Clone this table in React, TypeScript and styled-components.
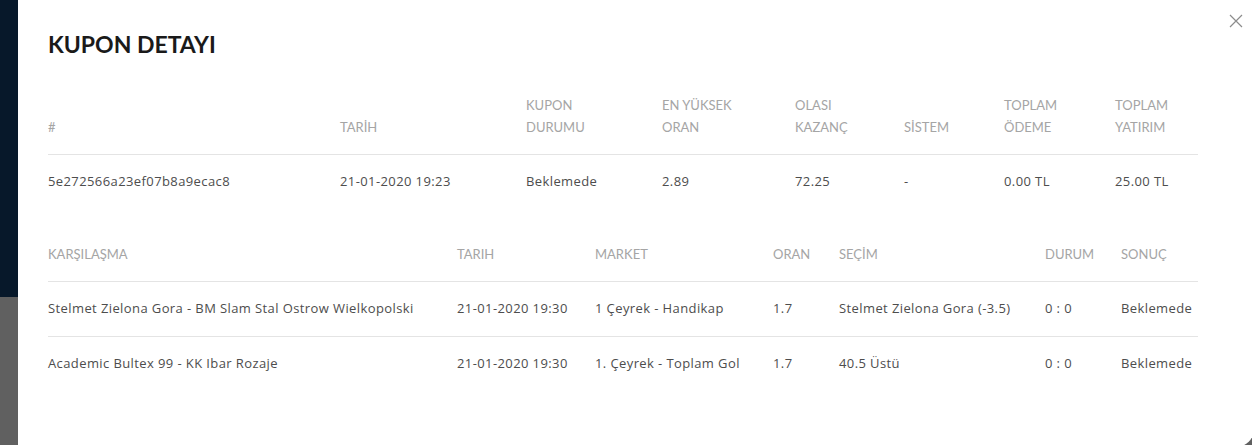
import React from "react";
import styled, { createGlobalStyle } from "styled-components";

const Global = createGlobalStyle`
  html, body { margin: 0; padding: 0; height: 445px; overflow: hidden; }
  body { font-family: Lato, "Noto Sans", sans-serif; }
`;

const Backdrop = styled.div`
  height: 445px;
  display: flex;
  padding-left: 18px;
  background: linear-gradient(to bottom, #07182a 0, #07182a 297px, #606060 297px);
  overflow: hidden;
`;

const Modal = styled.div`
  position: relative;
  flex: 1;
  margin-right: -2px;
  height: 447px;
  flex-shrink: 0;
  background: #fff;
  border-bottom-right-radius: 18px;
  padding: 30px 0 0 30px;
  box-sizing: border-box;
`;

const Close = styled.button`
  position: absolute;
  top: 14px;
  right: 11px;
  width: 14px;
  height: 14px;
  padding: 0;
  border: 0;
  background: transparent;
  cursor: pointer;
  display: flex;
`;

const Title = styled.h2`
  margin: 0 0 20px;
  font-size: 23px;
  line-height: 28px;
  font-weight: 700;
  color: #1a1a1a;
`;

const Table = styled.table<{ $gap?: number }>`
  width: 1150px;
  border-collapse: collapse;
  table-layout: fixed;
  margin-top: ${(p) => p.$gap ?? 0}px;
`;

const Th = styled.th`
  text-align: left;
  font-weight: 400;
  color: #a5a5a5;
  font-size: 13px;
  line-height: 22px;
  padding: 16px 0;
  vertical-align: bottom;
  border-bottom: 1px solid #e4e4e4;
  text-transform: uppercase;
  white-space: nowrap;
`;

const Td = styled.td<{ $line?: boolean }>`
  font-family: "Open Sans", Lato, sans-serif;
  color: #4d4d4d;
  font-size: 13px;
  letter-spacing: 0.4px;
  line-height: 22px;
  padding: 15px 0 17px;
  white-space: nowrap;
  border-bottom: ${(p) => (p.$line ? "1px solid #e4e4e4" : "0")};
`;

const summaryCols = [292, 186, 136, 133, 109, 100, 111, 83];
const summaryHead: React.ReactNode[] = [
  "#",
  "TARİH",
  <>KUPON<br />DURUMU</>,
  <>EN YÜKSEK<br />ORAN</>,
  <>OLASI<br />KAZANÇ</>,
  "SİSTEM",
  <>TOPLAM<br />ÖDEME</>,
  <>TOPLAM<br />YATIRIM</>,
];
const summaryRow = [
  "5e272566a23ef07b8a9ecac8",
  "21-01-2020 19:23",
  "Beklemede",
  "2.89",
  "72.25",
  "-",
  "0.00 TL",
  "25.00 TL",
];

const matchCols = [409, 138, 178, 66, 206, 76, 77];
const matchHead = ["KARŞILAŞMA", "TARIH", "MARKET", "ORAN", "SEÇİM", "DURUM", "SONUÇ"];
const matchRows = [
  [
    "Stelmet Zielona Gora - BM Slam Stal Ostrow Wielkopolski",
    "21-01-2020 19:30",
    "1 Çeyrek - Handikap",
    "1.7",
    "Stelmet Zielona Gora (-3.5)",
    "0 : 0",
    "Beklemede",
  ],
  [
    "Academic Bultex 99 - KK Ibar Rozaje",
    "21-01-2020 19:30",
    "1. Çeyrek - Toplam Gol",
    "1.7",
    "40.5 Üstü",
    "0 : 0",
    "Beklemede",
  ],
];

export default function App() {
  return (
    <>
      <Global />
      <Backdrop>
        <Modal>
          <Close aria-label="Kapat">
            <svg width="14" height="14" viewBox="0 0 14 14">
              <path d="M1 1 L13 13 M13 1 L1 13" stroke="#8c8c8c" strokeWidth="1.2" fill="none" />
            </svg>
          </Close>
          <Title>KUPON DETAYI</Title>
          <Table>
            <colgroup>
              {summaryCols.map((w, i) => (
                <col key={i} style={{ width: w }} />
              ))}
            </colgroup>
            <thead>
              <tr>
                {summaryHead.map((h, i) => (
                  <Th key={i}>{h}</Th>
                ))}
              </tr>
            </thead>
            <tbody>
              <tr>
                {summaryRow.map((c, i) => (
                  <Td key={i}>{c}</Td>
                ))}
              </tr>
            </tbody>
          </Table>
          <Table $gap={18}>
            <colgroup>
              {matchCols.map((w, i) => (
                <col key={i} style={{ width: w }} />
              ))}
            </colgroup>
            <thead>
              <tr>
                {matchHead.map((h, i) => (
                  <Th key={i}>{h}</Th>
                ))}
              </tr>
            </thead>
            <tbody>
              {matchRows.map((r, ri) => (
                <tr key={ri}>
                  {r.map((c, i) => (
                    <Td key={i} $line={ri < matchRows.length - 1}>
                      {c}
                    </Td>
                  ))}
                </tr>
              ))}
            </tbody>
          </Table>
        </Modal>
      </Backdrop>
    </>
  );
}
